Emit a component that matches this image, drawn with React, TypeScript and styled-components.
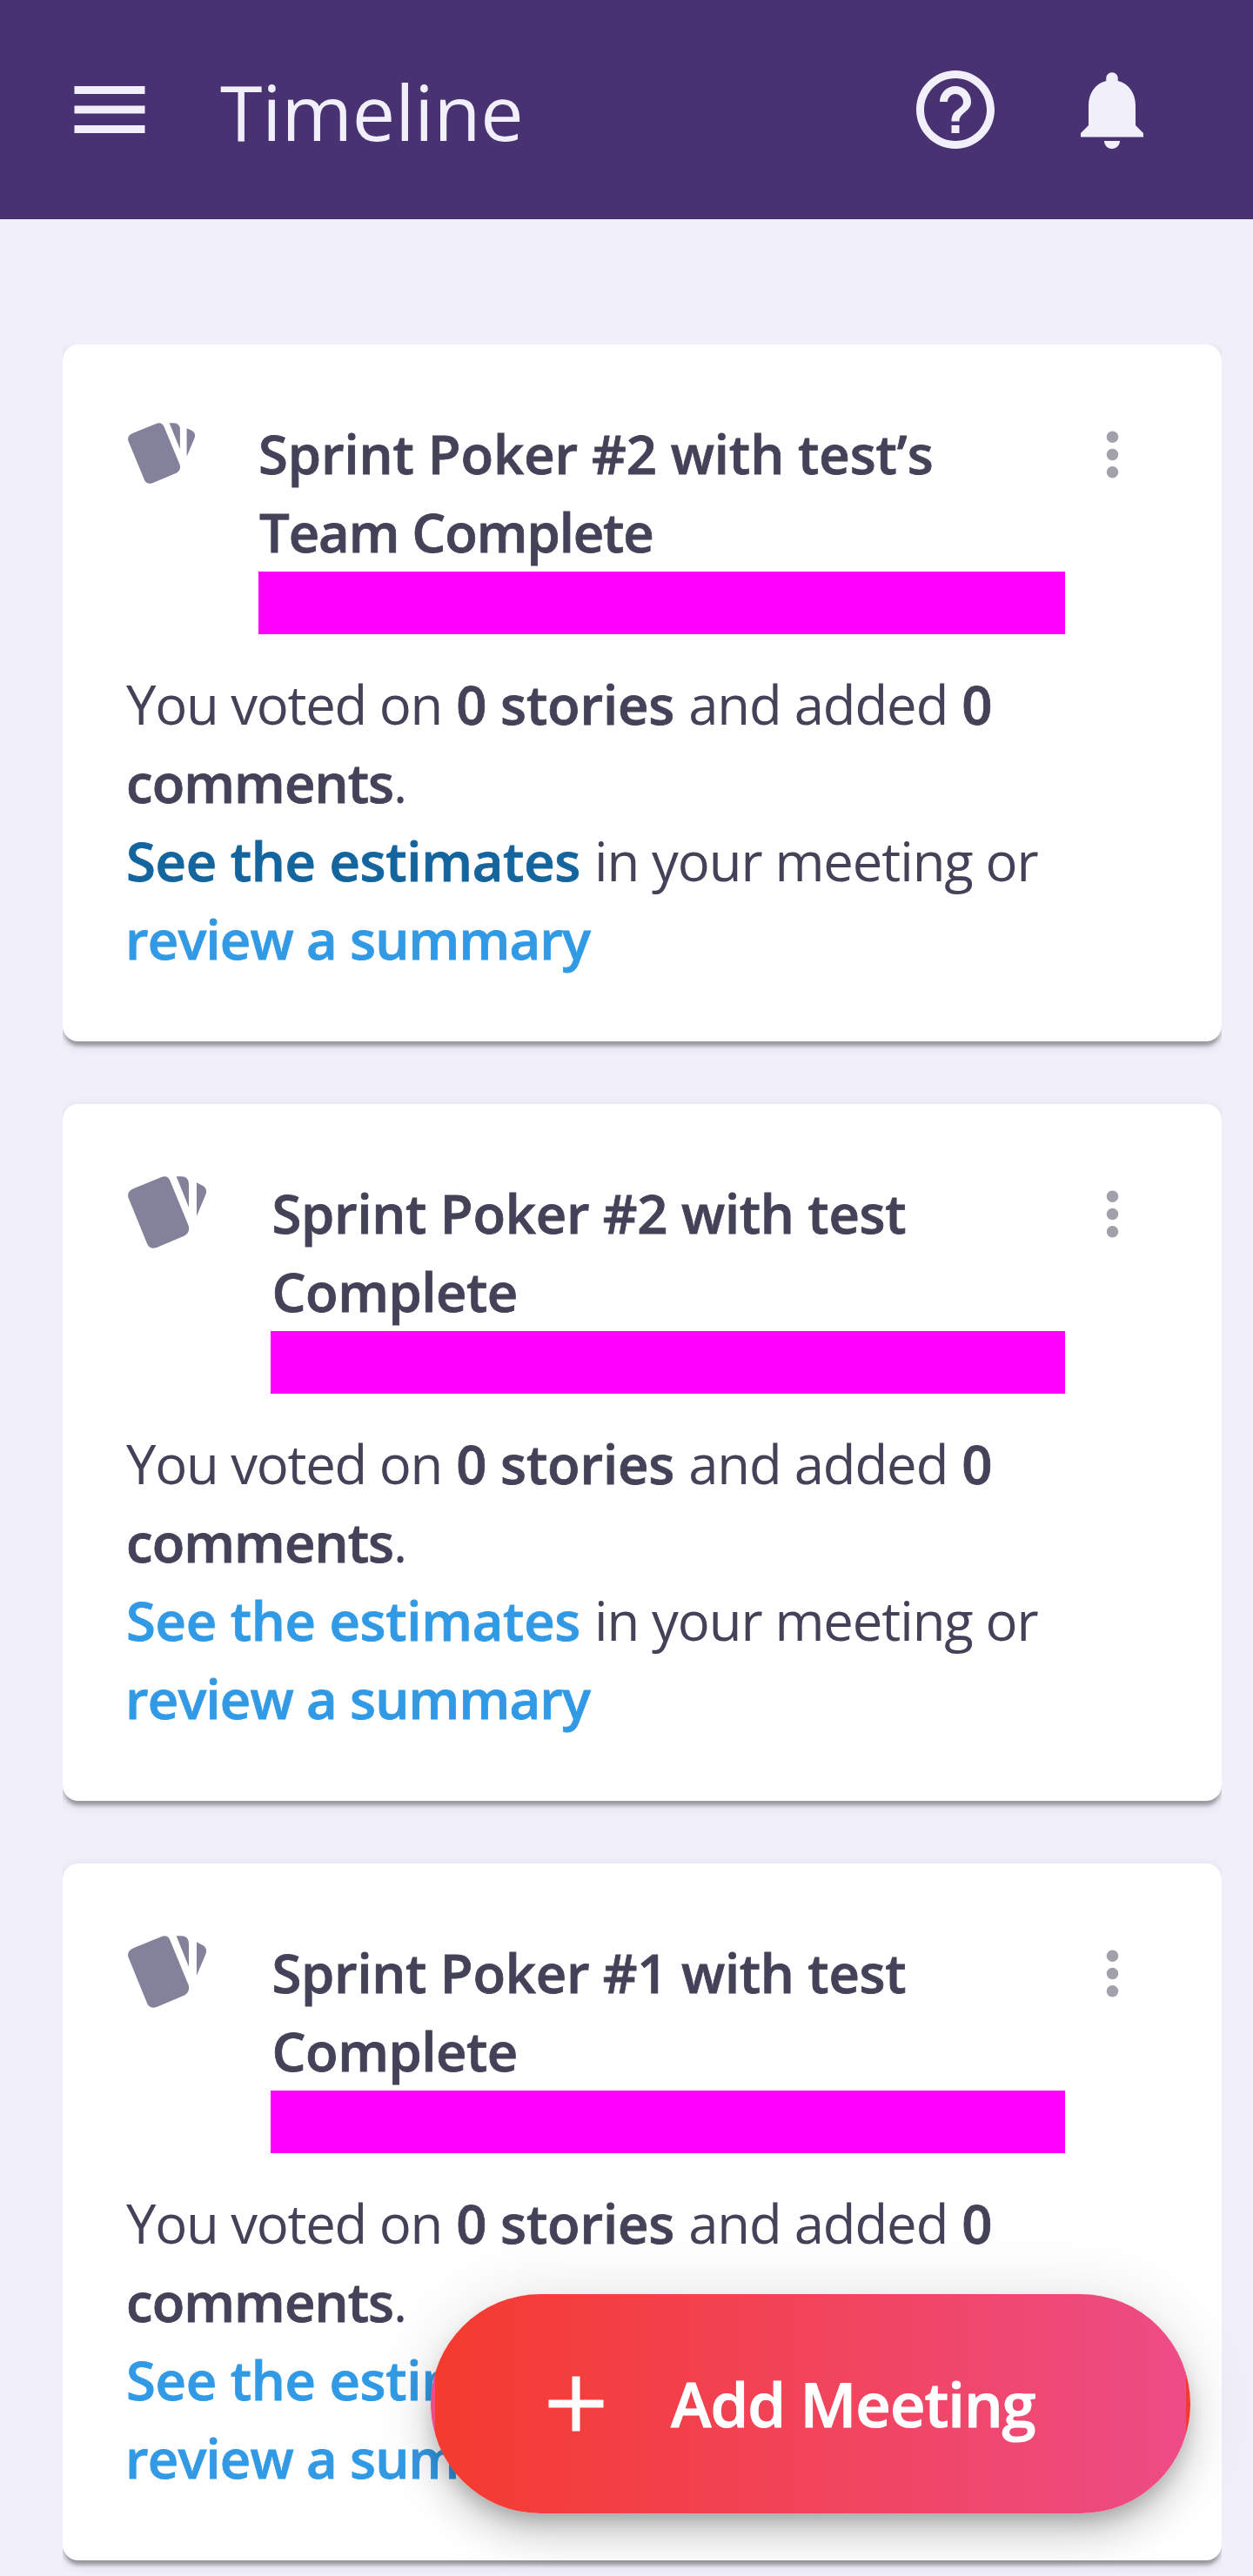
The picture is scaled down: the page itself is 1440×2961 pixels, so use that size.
import React from 'react';
import styled, { createGlobalStyle } from 'styled-components';

const GlobalStyle = createGlobalStyle`
  * { box-sizing: border-box; }
  body { margin: 0; background: #f1f0fa; }
`;

const Page = styled.div`
  width: 1440px;
  height: 2961px;
  overflow: hidden;
  display: flex;
  flex-direction: column;
  background: #f1f0fa;
  color: #444258;
  font-family: 'Open Sans', 'Noto Sans', sans-serif;
`;

const TopBar = styled.header`
  flex: none;
  display: flex;
  align-items: center;
  height: 252px;
  padding: 0 108px 0 72px;
  background: #493272;
  color: #f1f0fa;
`;

const PageTitle = styled.h1`
  flex: 1;
  margin: 4px 0 0 73px;
  font-size: 88px;
  font-weight: 400;
  line-height: 120px;
  letter-spacing: -0.1px;
`;

const IconButton = styled.button`
  display: flex;
  padding: 0;
  border: 0;
  background: none;
  color: inherit;
`;

const TopActions = styled.div`
  display: flex;
  gap: 72px;
`;

const Icon = styled.svg<{ $size: number }>`
  display: block;
  flex: none;
  width: ${(p) => p.$size}px;
  height: ${(p) => p.$size}px;
  fill: currentColor;
`;

const Feed = styled.main`
  flex: 1;
  display: flex;
  flex-direction: column;
  gap: 72px;
  margin: 144px 36px 0 72px;
  overflow: hidden;
`;

const Card = styled.article`
  flex: none;
  height: 801px;
  padding: 80px 72px 0;
  border-radius: 18px;
  background: #fff;
  box-shadow:
    0 9px 4.5px -4.5px rgba(0, 0, 0, 0.2),
    0 4.5px 4.5px 0 rgba(0, 0, 0, 0.14),
    0 4.5px 13.5px 0 rgba(0, 0, 0, 0.12);
`;

const CardHeader = styled.div`
  display: flex;
  align-items: flex-start;
  height: 253px;
`;

const CardsGlyph = styled.svg<{ $compact: boolean }>`
  flex: none;
  width: ${(p) => (p.$compact ? 77 : 90)}px;
  height: ${(p) => (p.$compact ? 70 : 83)}px;
  margin: ${(p) => (p.$compact ? '10px 73px 0 3px' : '3px 73.5px 0 3px')};
  fill: #84819b;
`;

const Heading = styled.div`
  flex: 1;
`;

const Title = styled.h2<{ $inset: number }>`
  margin: 0 0 1px;
  padding-left: ${(p) => p.$inset}px;
  font-size: 61.6px;
  font-weight: 600;
  -webkit-text-stroke: 0.8px currentColor;
  line-height: 90px;
  white-space: nowrap;
`;

const Line = styled.span<{ $track?: number; $shift?: number }>`
  display: block;
  margin-left: ${(p) => p.$shift ?? 0}px;
  letter-spacing: ${(p) => p.$track ?? 0}px;
`;

const DateBar = styled.div`
  height: 72px;
  background: #f0f;
`;

const MenuButton = styled(IconButton)`
  margin: 5.5px 13.5px 0;
  color: #a1a0ab;
`;

const Body = styled.div`
  margin-top: 35px;
  font-size: 61.6px;
  line-height: 90px;
  white-space: nowrap;
`;

const Run = styled.span<{ $track: number }>`
  letter-spacing: ${(p) => p.$track}px;
`;

const Strong = styled.b<{ $track?: number }>`
  font-weight: 600;
  -webkit-text-stroke: 0.8px currentColor;
  letter-spacing: ${(p) => p.$track ?? 0}px;
`;

const Link = styled.a<{ $active?: boolean; $track: number }>`
  color: ${(p) => (p.$active ? '#14649e' : '#329ae5')};
  font-weight: 600;
  -webkit-text-stroke: 0.8px currentColor;
  letter-spacing: ${(p) => p.$track}px;
`;

const AddButton = styled.button`
  position: fixed;
  top: 2637px;
  left: 495px;
  display: flex;
  align-items: center;
  gap: 55.5px;
  width: 873px;
  height: 252px;
  padding: 0 0 0 107.5px;
  border: 5px solid transparent;
  border-radius: 126px;
  background: linear-gradient(to right, #f53b2f 0%, #ed4c86 100%);
  box-shadow:
    0 13.5px 22.5px -4.5px rgba(0, 0, 0, 0.2),
    0 27px 45px 0 rgba(0, 0, 0, 0.14),
    0 4.5px 81px 0 rgba(0, 0, 0, 0.12);
  color: #fff;
  font: 600 70.4px/96px 'Open Sans', 'Noto Sans', sans-serif;
  -webkit-text-stroke: 1px currentColor;
  letter-spacing: -1px;
  white-space: nowrap;
`;

interface Meeting {
  id: number;
  title: { text: string; track: number; shift?: number }[];
  compact?: boolean;
  active?: boolean;
}

const meetings: Meeting[] = [
  {
    id: 1,
    compact: true,
    active: true,
    title: [
      { text: 'Sprint Poker #2 with test’s', track: -0.1 },
      { text: 'Team Complete', track: -1.1, shift: 1 },
    ],
  },
  {
    id: 2,
    title: [
      { text: 'Sprint Poker #2 with test', track: -0.3, shift: 1 },
      { text: 'Complete', track: -0.5, shift: 1 },
    ],
  },
  {
    id: 3,
    title: [
      { text: 'Sprint Poker #1 with test', track: -0.3, shift: 1 },
      { text: 'Complete', track: -0.5, shift: 1 },
    ],
  },
];

function MeetingCard({ title, compact = false, active = false }: Meeting) {
  return (
    <Card>
      <CardHeader>
        <CardsGlyph $compact={compact} viewBox="52 51 270 250" preserveAspectRatio="none">
          <path d="M53 124Q49 103 71 94L168 54Q189 46 198 68L261 222Q267 246 247 257L151 298Q129 306 119 287Z" />
          <path d="M219 52H236Q262 52 262 79V159Z" />
          <path d="M289 73L303 80Q329 91 320 115L289 189Z" />
        </CardsGlyph>
        <Heading>
          <Title $inset={compact ? 0 : 1}>
            {title.map((l) => (
              <Line key={l.text} $track={l.track} $shift={l.shift}>
                {l.text}
              </Line>
            ))}
          </Title>
          <DateBar />
        </Heading>
        <MenuButton aria-label="More">
          <Icon $size={81} viewBox="0 0 24 24">
            <circle cx="12" cy="6" r="2" />
            <circle cx="12" cy="12" r="2" />
            <circle cx="12" cy="18" r="2" />
          </Icon>
        </MenuButton>
      </CardHeader>
      <Body>
        <Line $shift={1}>
          <Run $track={-1.25}>You voted on</Run> <Strong $track={-0.15}>0 stories</Strong>{' '}
          <Run $track={-1.05}>and added</Run> <Strong>0</Strong>
        </Line>
        <Line $shift={1}>
          <Strong $track={-0.95}>comments</Strong>.
        </Line>
        <Line $shift={1}>
          <Link $active={active} $track={-0.3}>
            See the estimates
          </Link>{' '}
          <Run $track={-1.1}>in your meeting or</Run>
        </Line>
        <Line>
          <Link $track={-0.83}>review a summary</Link>
        </Line>
      </Body>
    </Card>
  );
}

export default function App() {
  return (
    <Page>
      <GlobalStyle />
      <TopBar>
        <IconButton aria-label="Menu">
          <Icon $size={108} viewBox="0 0 24 24">
            <path d="M3 18h18v-2H3v2zm0-5h18v-2H3v2zm0-7v2h18V6H3z" />
          </Icon>
        </IconButton>
        <PageTitle>Timeline</PageTitle>
        <TopActions>
          <IconButton aria-label="Help">
            <Icon $size={108} viewBox="0 0 24 24">
              <path d="M11 18h2v-2h-2v2zm1-16C6.48 2 2 6.48 2 12s4.48 10 10 10 10-4.48 10-10S17.52 2 12 2zm0 18c-4.41 0-8-3.59-8-8s3.59-8 8-8 8 3.59 8 8-3.59 8-8 8zm0-14c-2.21 0-4 1.79-4 4h2c0-1.1.9-2 2-2s2 .9 2 2c0 2-3 1.75-3 5h2c0-2.25 3-2.5 3-5 0-2.21-1.79-4-4-4z" />
            </Icon>
          </IconButton>
          <IconButton aria-label="Notifications">
            <Icon $size={108} viewBox="0 0 24 24">
              <path d="M12 22c1.1 0 2-.9 2-2h-4c0 1.1.89 2 2 2zm6-6v-5c0-3.07-1.64-5.64-4.5-6.32V4c0-.83-.67-1.5-1.5-1.5s-1.5.67-1.5 1.5v.68C7.63 5.36 6 7.92 6 11v5l-2 2v1h16v-1l-2-2z" />
            </Icon>
          </IconButton>
        </TopActions>
      </TopBar>
      <Feed>
        {meetings.map((m) => (
          <MeetingCard key={m.id} {...m} />
        ))}
      </Feed>
      <AddButton>
        <Icon $size={108} viewBox="0 0 24 24">
          <path d="M19 13h-6v6h-2v-6H5v-2h6V5h2v6h6v2z" />
        </Icon>
        Add Meeting
      </AddButton>
    </Page>
  );
}
